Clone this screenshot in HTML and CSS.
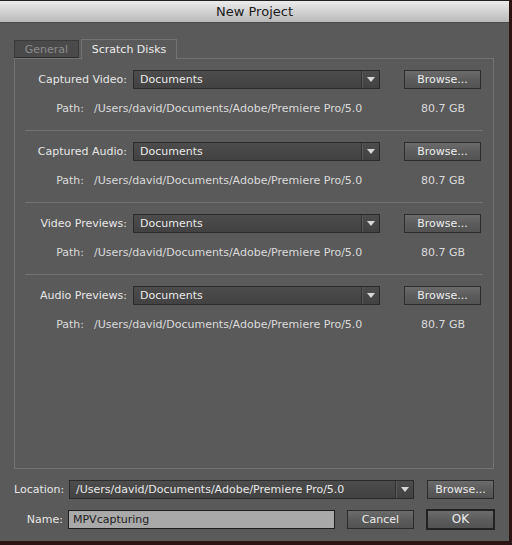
FILE: index.html
```html
<!DOCTYPE html>
<html>
<head>
<meta charset="utf-8">
<link rel="stylesheet" href="styles.css">
</head>
<body>
<div class="window">
  <div class="titlebar">New Project</div>
  <div class="body">
    <div class="tabs">
      <div class="tab tab-off">General</div>
      <div class="tab tab-on">Scratch Disks</div>
    </div>
    <div class="panel">
      <div class="section">
        <div class="row">
          <div class="label">Captured Video:</div>
          <div class="dropdown"><span class="dd-text">Documents</span><span class="dd-arrow"></span></div>
          <div class="btn browse">Browse...</div>
        </div>
        <div class="path-row">
          <div class="plabel">Path:</div>
          <div class="pval">/Users/david/Documents/Adobe/Premiere Pro/5.0</div>
          <div class="psize">80.7 GB</div>
        </div>
      </div>
      <div class="sep"></div>
      <div class="section">
        <div class="row">
          <div class="label">Captured Audio:</div>
          <div class="dropdown"><span class="dd-text">Documents</span><span class="dd-arrow"></span></div>
          <div class="btn browse">Browse...</div>
        </div>
        <div class="path-row">
          <div class="plabel">Path:</div>
          <div class="pval">/Users/david/Documents/Adobe/Premiere Pro/5.0</div>
          <div class="psize">80.7 GB</div>
        </div>
      </div>
      <div class="sep"></div>
      <div class="section">
        <div class="row">
          <div class="label">Video Previews:</div>
          <div class="dropdown"><span class="dd-text">Documents</span><span class="dd-arrow"></span></div>
          <div class="btn browse">Browse...</div>
        </div>
        <div class="path-row">
          <div class="plabel">Path:</div>
          <div class="pval">/Users/david/Documents/Adobe/Premiere Pro/5.0</div>
          <div class="psize">80.7 GB</div>
        </div>
      </div>
      <div class="sep"></div>
      <div class="section">
        <div class="row">
          <div class="label">Audio Previews:</div>
          <div class="dropdown"><span class="dd-text">Documents</span><span class="dd-arrow"></span></div>
          <div class="btn browse">Browse...</div>
        </div>
        <div class="path-row">
          <div class="plabel">Path:</div>
          <div class="pval">/Users/david/Documents/Adobe/Premiere Pro/5.0</div>
          <div class="psize">80.7 GB</div>
        </div>
      </div>
    </div>
    <div class="bottom-row loc-row">
      <div class="blabel">Location:</div>
      <div class="dropdown loc-dd"><span class="dd-text">/Users/david/Documents/Adobe/Premiere Pro/5.0</span><span class="dd-arrow"></span></div>
      <div class="btn loc-browse">Browse...</div>
    </div>
    <div class="bottom-row name-row">
      <div class="blabel">Name:</div>
      <div class="name-input">MPVcapturing</div>
      <div class="btn cancel">Cancel</div>
      <div class="btn ok">OK</div>
    </div>
  </div>
</div>
</body>
</html>
```
FILE: styles.css
```css
* { box-sizing: border-box; }
html, body { margin: 0; padding: 0; }
body {
  width: 512px;
  height: 545px;
  background: #2a1414;
  font-family: "DejaVu Sans", "Liberation Sans", sans-serif;
  font-size: 11px;
  color: #e2e2e2;
  overflow: hidden;
}
.window {
  width: 509px;
  height: 541px;
  background: #5a5a5a;
  border-top: 1px solid #222;
  display: flex;
  flex-direction: column;
}
.titlebar {
  height: 22px;
  flex: none;
  background: linear-gradient(#ececec, #d2d2d2 50%, #b9b9b9);
  border-bottom: 1px solid #4a4a4a;
  color: #1c1c1c;
  font-size: 13px;
  text-align: center;
  line-height: 22px;
}
.body {
  padding: 15px 0 0 14px;
  display: flex;
  flex-direction: column;
}
.tabs {
  display: flex;
  align-items: flex-end;
  gap: 2px;
  height: 20px;
}
.tab {
  height: 18px;
  line-height: 17px;
  font-size: 11px;
  text-align: center;
}
.tab-off {
  width: 65px;
  background: #4a4a4a;
  color: #8a8a8a;
  border: 1px solid #3a3a3a;
  border-bottom: 1px solid #2e2e2e;
}
.tab-on {
  width: 96px;
  height: 20px;
  line-height: 20px;
  background: #5a5a5a;
  color: #ececec;
  border: 1px solid #737373;
  border-bottom: none;
  margin-bottom: -1px;
  position: relative;
  z-index: 1;
}
.panel {
  width: 480px;
  height: 411px;
  border: 1px solid #737373;
}
.section {
  padding-top: 11px;
  height: 71px;
}
.row {
  display: flex;
  align-items: center;
  height: 19px;
}
.label {
  width: 112px;
  text-align: right;
  margin-right: 6px;
  color: #e6e6e6;
  white-space: nowrap;
}
.dropdown {
  width: 247px;
  height: 19px;
  background: linear-gradient(#4c4c4c, #424242);
  border: 1px solid #2a2a2a;
  display: flex;
  align-items: center;
}
.dd-text {
  flex: 1;
  padding-left: 6px;
  color: #e8e8e8;
  white-space: nowrap;
  overflow: hidden;
}
.dd-arrow {
  width: 18px;
  height: 17px;
  border-left: 1px solid #333;
  box-shadow: inset 1px 0 0 #5a5a5a;
  position: relative;
}
.dd-arrow::after {
  content: "";
  position: absolute;
  left: 5px;
  top: 6px;
  border-left: 4px solid transparent;
  border-right: 4px solid transparent;
  border-top: 5px solid #d8d8d8;
}
.btn {
  height: 19px;
  line-height: 17px;
  text-align: center;
  background: linear-gradient(#6c6c6c, #5c5c5c 50%, #535353);
  border: 1px solid #2c2c2c;
  color: #ececec;
  white-space: nowrap;
}
.browse {
  width: 77px;
  margin-left: 24px;
}
.path-row {
  display: flex;
  align-items: center;
  margin-top: 12px;
  height: 14px;
  color: #dadada;
}
.plabel {
  width: 69px;
  text-align: right;
}
.pval {
  flex: 1;
  margin-left: 10px;
  white-space: nowrap;
}
.psize {
  width: 80px;
  text-align: right;
  margin-right: 28px;
}
.sep {
  height: 1px;
  margin: 0 10px;
  background: #737373;
}
.bottom-row {
  display: flex;
  align-items: center;
  height: 19px;
}
.loc-row {
  margin-top: 11px;
}
.name-row {
  margin-top: 11px;
}
.blabel {
  width: 49px;
  text-align: right;
  margin-right: 6px;
  color: #e6e6e6;
}
.loc-dd {
  width: 345px;
}
.loc-browse {
  width: 67px;
  margin-left: 13px;
}
.name-input {
  width: 267px;
  height: 19px;
  line-height: 17px;
  padding-left: 4px;
  background: #a9a9a9;
  border: 1px solid #1e1e1e;
  color: #1e1e1e;
  margin-left: -1px;
}
.cancel {
  width: 67px;
  margin-left: 12px;
}
.ok {
  width: 69px;
  height: 21px;
  line-height: 17px;
  margin-left: 12px;
  border: 2px solid #222;
  font-size: 12px;
}
```
